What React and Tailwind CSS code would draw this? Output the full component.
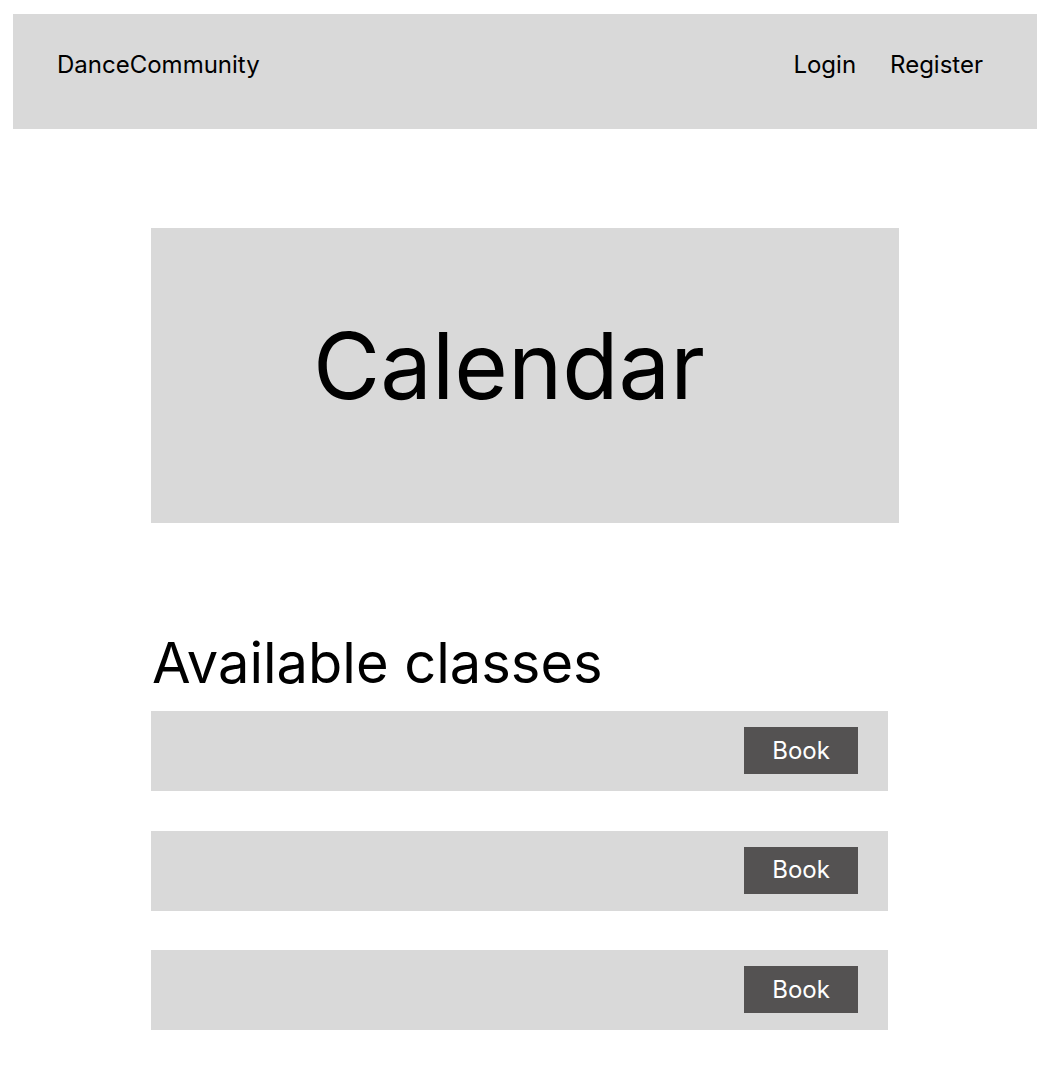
const classes = [1, 2, 3];

function Header() {
  return (
    <header className="ml-[13px] mr-[25px] mt-[14px] flex h-[115px] items-start justify-between bg-[#d9d9d9] pl-[44px] pr-[54px] pt-[39px]">
      <span className="text-[24px] leading-none text-black">DanceCommunity</span>
      <nav className="flex gap-[34px] text-[24px] leading-none text-black">
        <a href="#">Login</a>
        <a href="#">Register</a>
      </nav>
    </header>
  );
}

function ClassRow() {
  return (
    <div className="flex h-[80px] w-[737px] items-start justify-end bg-[#d9d9d9] pr-[30px] pt-[16px]">
      <button className="h-[47px] w-[114px] bg-[#545252] text-[24px] leading-none text-white" type="button">
        Book
      </button>
    </div>
  );
}

export default function App() {
  return (
    <div className="min-h-[1070px] bg-white font-['Inter',sans-serif]">
      <Header />
      <main className="ml-[151px] pt-[99px]">
        <section className="flex h-[295px] w-[748px] items-center justify-center bg-[#d9d9d9] pb-[19px] pr-[32px]">
          <h1 className="text-[92px] leading-none text-black">Calendar</h1>
        </section>
        <h2 className="ml-[1px] mt-[112px] text-[56px] leading-none text-black">Available classes</h2>
        <div className="mt-[20px] flex flex-col gap-[39.5px]">
          {classes.map((id) => (
            <ClassRow key={id} />
          ))}
        </div>
      </main>
    </div>
  );
}
